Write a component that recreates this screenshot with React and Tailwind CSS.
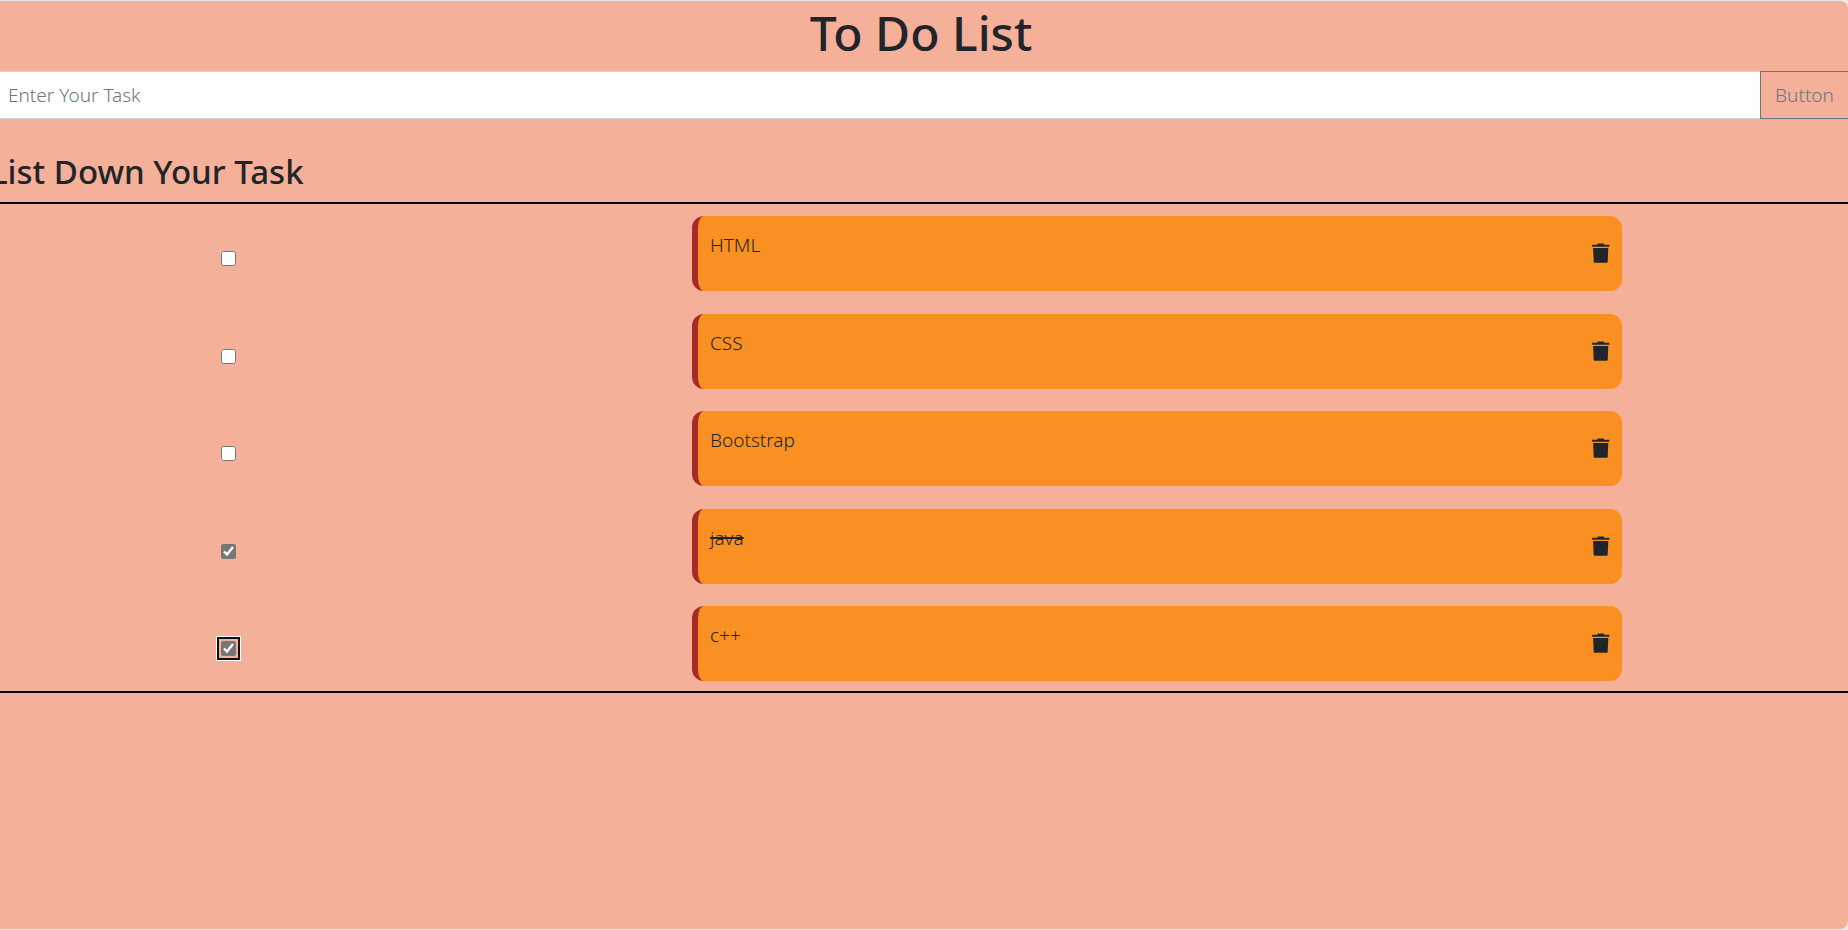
import { useState } from "react";

const initialTasks = [
  { id: 1, name: "HTML", checked: false, struck: false },
  { id: 2, name: "CSS", checked: false, struck: false },
  { id: 3, name: "Bootstrap", checked: false, struck: false },
  { id: 4, name: "java", checked: true, struck: true },
  { id: 5, name: "c++", checked: true, struck: false, focused: true },
];

function TrashIcon() {
  return (
    <svg viewBox="0 0 18 20" className="h-5 w-[18px]" fill="currentColor" aria-hidden="true">
      <path d="M5.5 0.6h6.4v1.1H17.3v2H0.1v-2H5.5z" />
      <path d="M1.1 4.9h15.2l-0.6 13.9q-0.05 0.9-0.9 0.9H2.6q-0.85 0-0.9-0.9z" />
    </svg>
  );
}

function Task({ task, onToggle, onDelete }) {
  const id = `task-${task.id}`;
  return (
    <li className="grid grid-cols-[457fr_235fr_930fr_226fr]">
      <div className="flex items-center justify-center pt-2.5">
        <input
          id={id}
          type="checkbox"
          checked={task.checked}
          onChange={onToggle}
          className={
            task.focused
              ? "size-[15px] rounded-[3px] accent-[#767676] shadow-[0_0_0_2px_#f5b09a,0_0_0_4px_#101010,0_0_0_5px_#ffffff]"
              : "size-[15px] accent-[#767676]"
          }
        />
      </div>
      <div className="col-start-3 flex h-[75px] items-start justify-between rounded-xl border-l-6 border-[#a52a2a] bg-[#fa9021] pr-3 pl-3">
        <label
          htmlFor={id}
          className={
            task.struck
              ? "pt-3 text-[19px] leading-[34px] font-light line-through decoration-2"
              : "pt-3 text-[19px] leading-[34px] font-light"
          }
        >
          {task.name}
        </label>
        <button type="button" aria-label={`Delete ${task.name}`} className="mt-[27px]" onClick={onDelete}>
          <TrashIcon />
        </button>
      </div>
    </li>
  );
}

export default function App() {
  const [tasks, setTasks] = useState(initialTasks);
  const [text, setText] = useState("");

  const addTask = (event) => {
    event.preventDefault();
    if (!text.trim()) return;
    setTasks([...tasks, { id: Date.now(), name: text, checked: false, struck: false }]);
    setText("");
  };

  const toggle = (id) =>
    setTasks(tasks.map((t) => (t.id === id ? { ...t, checked: !t.checked, struck: !t.checked } : t)));

  return (
    <div className="min-h-screen bg-[#e8e8e8] py-px font-['Noto_Sans','Open_Sans',sans-serif] text-[#212529]">
      <main className="min-h-[calc(100vh-2px)] overflow-hidden rounded-r-lg bg-[#f5b09a]">
        <h1 className="h-[70px] pr-1.5 text-center text-5xl leading-[64px] font-medium">To Do List</h1>
        <form className="flex h-12" onSubmit={addTask}>
          <input
            type="text"
            aria-label="Enter Your Task"
            placeholder="Enter Your Task"
            value={text}
            onChange={(e) => setText(e.target.value)}
            className="min-w-0 flex-1 border-y border-[#ced4da] bg-white px-2 text-[19px] font-light placeholder:text-[#6c757d]"
          />
          <button
            type="submit"
            className="w-22 border border-r-0 border-[#6c757d] text-[19px] font-light text-[#6c757d]"
          >
            Button
          </button>
        </form>
        <h2 className="-ml-2.5 h-[83px] pt-8 text-[33px] leading-[42px] font-medium">List Down Your Task</h2>
        <ul className="flex min-h-[491px] flex-col justify-between border-y-2 border-black pt-3 pb-2.5">
          {tasks.map((task) => (
            <Task
              key={task.id}
              task={task}
              onToggle={() => toggle(task.id)}
              onDelete={() => setTasks(tasks.filter((t) => t.id !== task.id))}
            />
          ))}
        </ul>
      </main>
    </div>
  );
}
